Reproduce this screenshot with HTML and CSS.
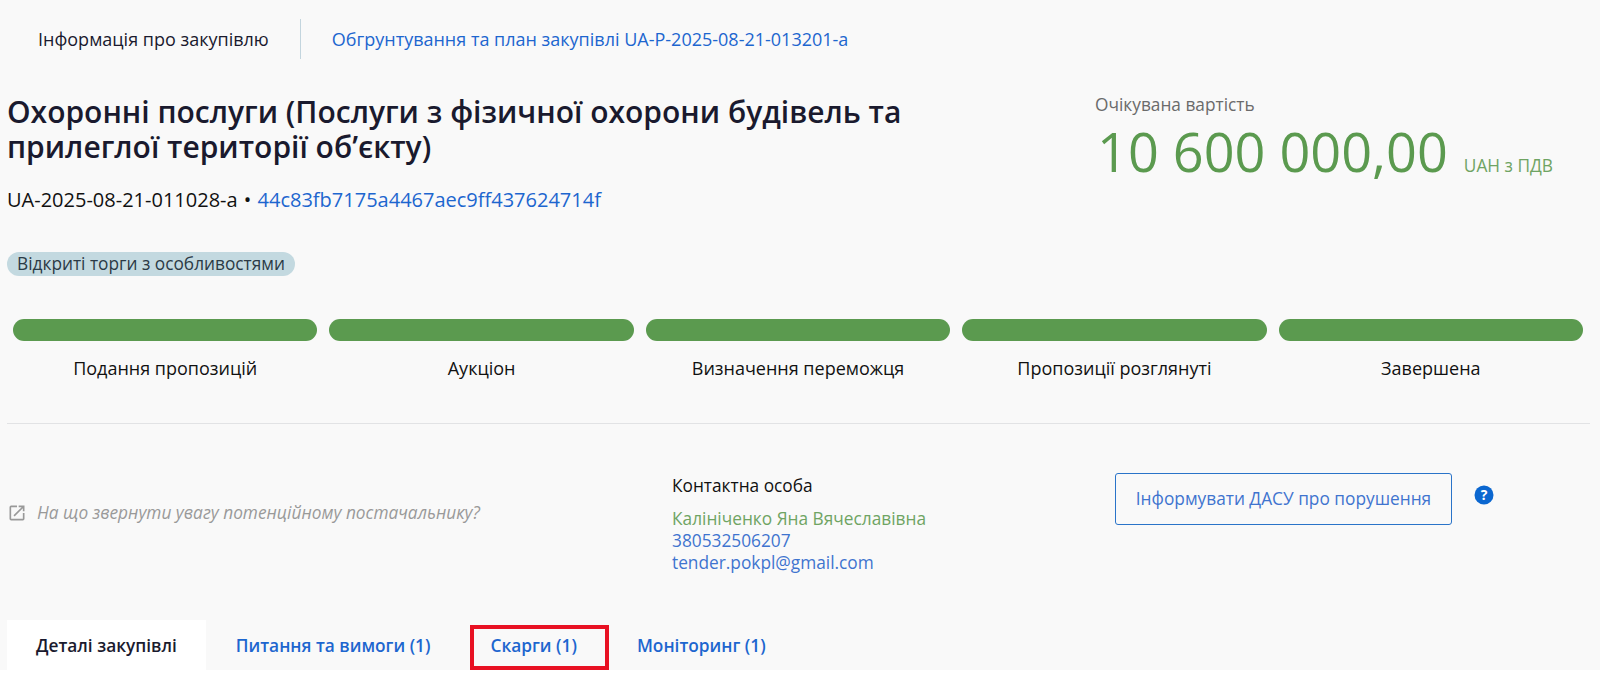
FILE: index.html
```html
<!DOCTYPE html>
<html lang="uk">
  <head>
    <meta charset="utf-8" />
    <title>Інформація про закупівлю</title>
    <link rel="stylesheet" href="styles.css">
  </head>
  <body>
    <div class="page">
      <!-- Top switch -->
      <nav class="top-nav">
        <span class="top-nav-current">Інформація про закупівлю</span>
        <a class="top-nav-link" href="#">Обгрунтування та план закупівлі UA-P-2025-08-21-013201-a</a>
      </nav>

      <!-- Title and price -->
      <header class="tender-head">
        <div class="tender-info">
          <h1 class="tender-title">Охоронні послуги (Послуги з фізичної охорони будівель та прилеглої території об’єкту)</h1>
          <div class="tender-id">UA-2025-08-21-011028-a <span class="tender-dot">•</span> <a href="#">44c83fb7175a4467aec9ff437624714f</a></div>
          <span class="tender-type">Відкриті торги з особливостями</span>
        </div>
        <div class="tender-price">
          <div class="price-label">Очікувана вартість</div>
          <div class="price-row">
            <span class="price-value">10 600 000,00</span>
            <span class="price-unit">UAH з ПДВ</span>
          </div>
        </div>
      </header>

      <!-- Status steps -->
      <ul class="steps">
        <li class="step"><span class="step-bar"></span>Подання пропозицій</li>
        <li class="step"><span class="step-bar"></span>Аукціон</li>
        <li class="step"><span class="step-bar"></span>Визначення переможця</li>
        <li class="step"><span class="step-bar"></span>Пропозиції розглянуті</li>
        <li class="step"><span class="step-bar"></span>Завершена</li>
      </ul>

      <!-- Hint, contact and report button -->
      <section class="details">
        <a class="hint" href="#">
          <svg class="hint-icon" viewBox="0 0 24 24" width="20" height="20">
            <path fill="#999" d="M19 19H5V5h7V3H5a2 2 0 0 0-2 2v14a2 2 0 0 0 2 2h14a2 2 0 0 0 2-2v-7h-2v7zM14 3v2h3.59l-9.83 9.83 1.41 1.41L19 6.41V10h2V3h-7z"/>
          </svg>
          На що звернути увагу потенційному постачальнику?
        </a>
        <div class="contact">
          <div class="contact-title">Контактна особа</div>
          <div class="contact-name">Калініченко Яна Вячеславівна</div>
          <a class="contact-link" href="#">380532506207</a>
          <a class="contact-link" href="#">tender.pokpl@gmail.com</a>
        </div>
        <div class="report">
          <a class="report-btn" href="#">Інформувати ДАСУ про порушення</a>
          <svg class="help-icon" viewBox="0 0 20 20" width="20" height="20">
            <circle cx="10" cy="10" r="9.5" fill="#0b67d0"/>
            <text x="10" y="15" text-anchor="middle" class="help-mark">?</text>
          </svg>
        </div>
      </section>

      <!-- Tabs -->
      <div class="tabs">
        <a class="tab tab-active" href="#">Деталі закупівлі</a>
        <a class="tab" href="#">Питання та вимоги (1)</a>
        <a class="tab tab-marked" href="#">Скарги (1)</a>
        <a class="tab" href="#">Моніторинг (1)</a>
      </div>
    </div>
  </body>
</html>
```

FILE: styles.css
```css
* {
  margin: 0;
  padding: 0;
  box-sizing: border-box;
}

body {
  background: #fff;
  font-family: 'Open Sans', sans-serif;
  font-size: 17.3px;
  color: #1a1a2e;
}

a {
  color: #1d66cf;
  text-decoration: none;
}

.page {
  height: 670px;
  padding: 19px 10px 0 7px;
  background: #f9f9f9;
  overflow: hidden;
}

/* Top switch */
.top-nav {
  display: flex;
  align-items: center;
  height: 40px;
  padding-left: 31px;
  font-size: 18px;
}

.top-nav-current {
  padding-right: 31px;
  border-right: 1px solid #c3d5de;
  line-height: 40px;
  color: #1a1a2e;
}

.top-nav-link {
  padding-left: 31px;
  font-weight: 500;
}

/* Title and price */
.tender-head {
  display: flex;
  justify-content: space-between;
  padding-top: 35px;
}

.tender-info {
  display: flex;
  flex-direction: column;
  align-items: flex-start;
  width: 1000px;
}

.tender-title {
  font-size: 30px;
  line-height: 35px;
  font-weight: 600;
  color: #1a1a2e;
}

.tender-id {
  margin-top: 24px;
  font-size: 20px;
  line-height: 24px;
  color: #111;
}

.tender-dot {
  margin: 0 1px;
}

.tender-type {
  margin-top: 40px;
  padding: 0 10px;
  height: 24px;
  line-height: 24px;
  border-radius: 12px;
  background: #c3d9e0;
  color: #2b3a46;
}

.tender-price {
  width: 495px;
  margin-top: -1px;
}

.price-label {
  color: #6b6b6b;
  line-height: 24px;
}

.price-row {
  display: flex;
  align-items: baseline;
  gap: 16px;
}

.price-value {
  font-size: 54px;
  line-height: 68px;
  color: #5b9a4f;
  padding-left: 2px;
}

.price-unit {
  color: #6fa463;
}

/* Status steps */
.steps {
  display: flex;
  gap: 12px;
  list-style: none;
  margin-top: 43px;
  padding: 0 7px 44px 6px;
  border-bottom: 1px solid #e2e3e5;
}

.step {
  flex: 1;
  text-align: center;
  font-size: 18px;
  line-height: 22px;
  color: #111;
}

.step-bar {
  display: block;
  height: 22px;
  margin-bottom: 16px;
  border-radius: 11px;
  background: #5b9a4f;
}

/* Hint, contact and report button */
.details {
  display: flex;
  align-items: flex-start;
  padding-top: 49px;
}

.hint {
  display: flex;
  align-items: center;
  gap: 10px;
  width: 665px;
  margin-top: 29px;
  line-height: 22px;
  font-style: italic;
  color: #999;
}

.hint-icon {
  flex: none;
}

.contact {
  width: 443px;
  margin-top: 2px;
  line-height: 22px;
}

.contact-title {
  color: #111;
  margin-bottom: 11px;
}

.contact-name {
  color: #6fa463;
}

.contact-link {
  display: block;
  color: #3f74cf;
}

.report {
  display: flex;
  align-items: flex-start;
  gap: 22px;
}

.report-btn {
  display: block;
  width: 337px;
  height: 52px;
  line-height: 50px;
  text-align: center;
  border: 1px solid #2a74c9;
  border-radius: 3px;
  color: #3f74cf;
}

.help-icon {
  margin-top: 12px;
}

.help-mark {
  font-family: 'Open Sans', sans-serif;
  font-size: 14px;
  font-weight: 700;
  fill: #fff;
}

/* Tabs */
.tabs {
  display: flex;
  align-items: flex-end;
  margin-top: 46px;
  height: 50px;
}

.tab {
  display: flex;
  align-items: center;
  height: 50px;
  padding: 0 30px;
  font-weight: 600;
}

.tab-active {
  padding: 0 29px;
  background: #fff;
  color: #1a1a2e;
}

.tab-marked {
  height: 45px;
  padding: 0 28px 5px 16px;
  margin-left: 10px;
  border: 4px solid #e81123;
}

.tab-marked + .tab {
  padding-left: 28px;
}
```
